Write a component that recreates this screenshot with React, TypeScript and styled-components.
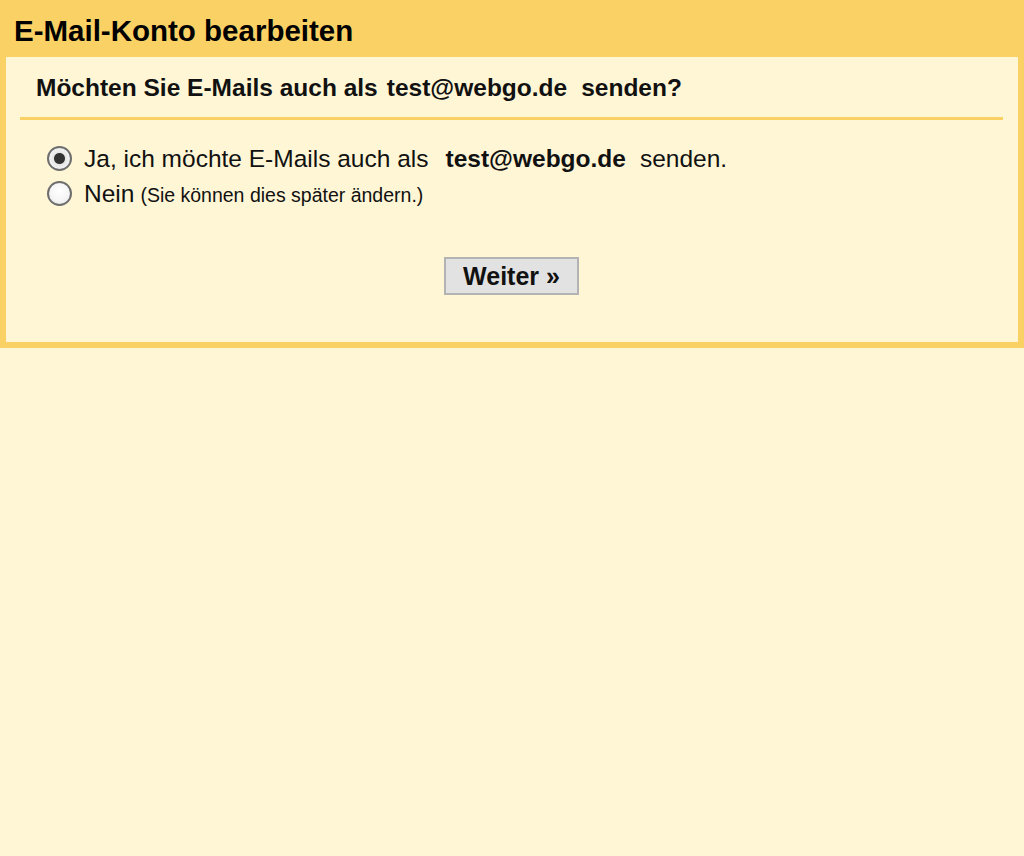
import React, { useState } from "react";
import styled, { createGlobalStyle } from "styled-components";

const GlobalStyle = createGlobalStyle`
  html, body {
    margin: 0;
    padding: 0;
    background: #fff6d6;
  }
  body {
    font-family: "Liberation Sans", Arial, sans-serif;
    color: #111;
  }
`;

const Frame = styled.div`
  background: #fad164;
  padding: 0 6px 6px 6px;
`;

const Title = styled.h1`
  margin: 0;
  height: 57px;
  box-sizing: border-box;
  padding: 5px 0 0 8px;
  line-height: 52px;
  font-size: 29.5px;
  font-weight: bold;
  color: #000;
`;

const Panel = styled.div`
  background: #fff6d6;
  height: 285px;
  box-sizing: border-box;
  padding: 0 15px 0 14px;
  display: flex;
  flex-direction: column;
`;

const Question = styled.div`
  height: 60px;
  line-height: 61px;
  padding-left: 16px;
  font-size: 24.5px;
  font-weight: bold;
  border-bottom: 3px solid #fad164;
  white-space: nowrap;
`;

const Address = styled.span<{ $before: number; $after: number }>`
  font-weight: bold;
  margin-left: ${(p) => p.$before}px;
  margin-right: ${(p) => p.$after}px;
`;

const Options = styled.div`
  display: flex;
  flex-direction: column;
  padding: 21px 0 0 27px;
`;

const OptionRow = styled.label`
  display: flex;
  align-items: center;
  gap: 12px;
  height: 35px;
  cursor: pointer;
  white-space: nowrap;
`;

const Radio = styled.input.attrs({ type: "radio" })`
  appearance: none;
  -webkit-appearance: none;
  margin: 0;
  width: 25px;
  height: 25px;
  border-radius: 50%;
  border: 2px solid #6e6e6e;
  box-sizing: border-box;
  background: radial-gradient(circle at 50% 40%, #ffffff 0%, #f4f4f4 60%, #dcdcdc 100%);
  flex: none;
  &:checked {
    background: radial-gradient(circle, #333 0, #333 5px, #e6e6e6 6px, #ffffff 100%);
  }
`;

const OptionText = styled.span`
  font-size: 24.5px;
  color: #111;
`;

const Hint = styled.span`
  font-size: 19.5px;
  margin-left: 6px;
`;

const ButtonRow = styled.div`
  display: flex;
  justify-content: center;
  padding-top: 46px;
`;

const Button = styled.button`
  width: 135px;
  height: 38px;
  background: #e2e2e2;
  border: 2px solid #b3b3b3;
  font-family: "Liberation Sans", Arial, sans-serif;
  font-size: 25px;
  font-weight: bold;
  color: #111;
  padding: 0;
  cursor: pointer;
`;

export default function App() {
  const [choice, setChoice] = useState("ja");
  return (
    <>
      <GlobalStyle />
      <Frame>
        <Title>E-Mail-Konto bearbeiten</Title>
        <Panel>
          <Question>
            Möchten Sie E-Mails auch als
            <Address $before={9} $after={14}>test@webgo.de</Address>
            senden?
          </Question>
          <Options>
            <OptionRow>
              <Radio name="send" checked={choice === "ja"} onChange={() => setChoice("ja")} />
              <OptionText>
                Ja, ich möchte E-Mails auch als
                <Address $before={17} $after={14}>test@webgo.de</Address>
                senden.
              </OptionText>
            </OptionRow>
            <OptionRow>
              <Radio name="send" checked={choice === "nein"} onChange={() => setChoice("nein")} />
              <OptionText>
                Nein<Hint>(Sie können dies später ändern.)</Hint>
              </OptionText>
            </OptionRow>
          </Options>
          <ButtonRow>
            <Button>Weiter »</Button>
          </ButtonRow>
        </Panel>
      </Frame>
    </>
  );
}
